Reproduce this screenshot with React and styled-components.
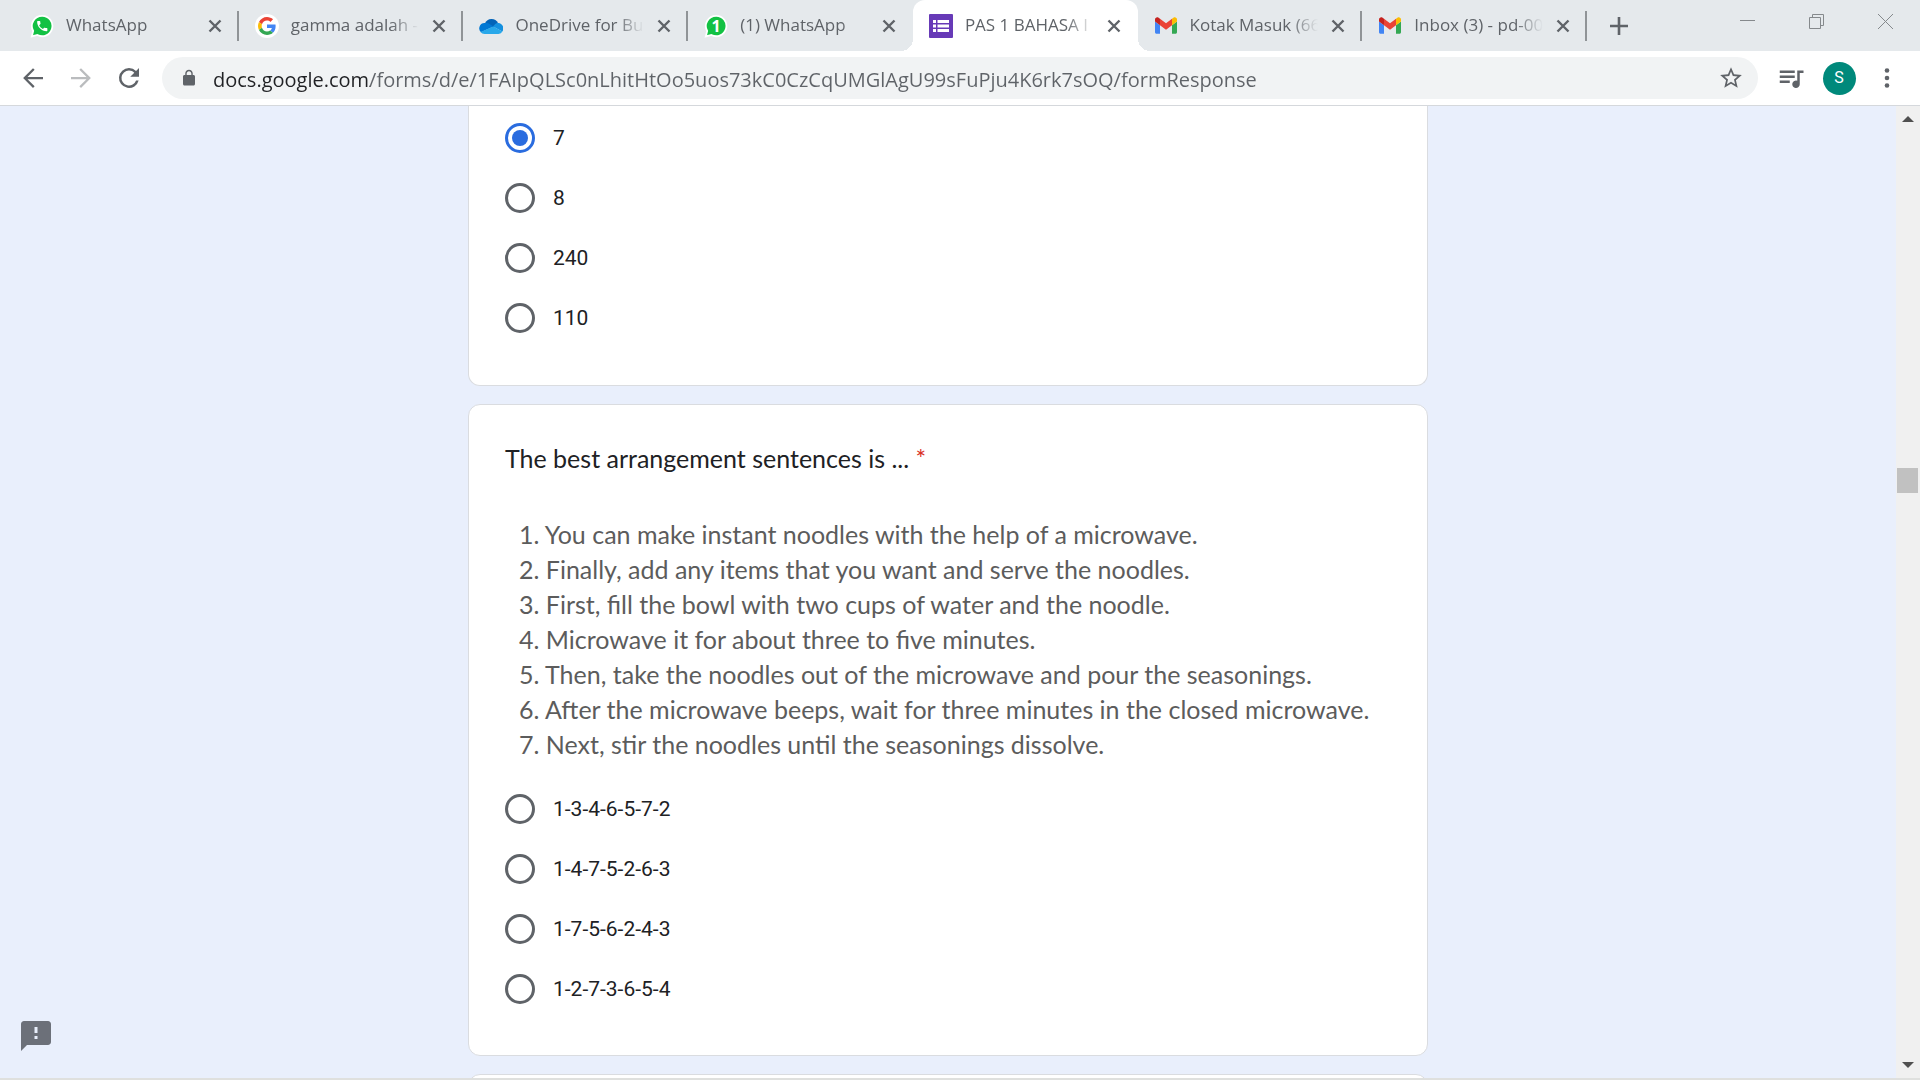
import React from 'react';
import styled, { createGlobalStyle, css } from 'styled-components';

const GlobalStyle = createGlobalStyle`
  *, *::before, *::after { box-sizing: border-box; }
  html, body { margin: 0; }
  body { font-family: Roboto, "Liberation Sans", sans-serif; color: #202124; }
  button, input { font: inherit; margin: 0; }
`;

/* ---------- window ---------- */

const Window = styled.div`
  display: flex;
  flex-direction: column;
  height: 100vh;
  overflow: hidden;
  background: #fff;
`;

const PlainButton = styled.button`
  display: flex;
  align-items: center;
  justify-content: center;
  padding: 0;
  border: 0;
  background: none;
  color: #5f6368;
`;

/* ---------- tab strip ---------- */

const TabStrip = styled.header`
  display: flex;
  flex: none;
  height: 51px;
  padding-left: 14px;
  background: #e5e9ec;
`;

const TabList = styled.nav`
  display: flex;
  flex: 0 1 1573px;
  min-width: 0;
`;

const Tab = styled.div`
  position: relative;
  display: flex;
  flex: 1 1 0;
  align-items: center;
  min-width: 0;
  padding: 0 12px 0 16px;

  ${({ $divider }) => $divider && css`
    &::after {
      content: "";
      position: absolute;
      right: 0;
      top: 11px;
      width: 2px;
      height: 30px;
      background: #909497;
    }
  `}

  ${({ $active }) => $active && css`
    background: #fff;
    border-radius: 12px 12px 0 0;

    &::before, &::after {
      content: "";
      position: absolute;
      bottom: 0;
      width: 12px;
      height: 12px;
    }
    &::before {
      right: 100%;
      background: radial-gradient(circle at 0 0, transparent 12px, #fff 12px);
    }
    &::after {
      left: 100%;
      background: radial-gradient(circle at 100% 0, transparent 12px, #fff 12px);
    }
  `}
`;

const Favicon = styled.span`
  display: flex;
  flex: none;
  align-items: center;
  justify-content: center;
  width: 24px;
  height: 24px;
`;

const TabTitle = styled.a`
  flex: 1;
  min-width: 0;
  margin: 0 8px 2px 12px;
  overflow: hidden;
  font: 17px/24px "Open Sans", "Noto Sans", sans-serif;
  color: #5f6368;
  text-decoration: none;
  white-space: nowrap;
  mask-image: linear-gradient(to left, transparent 0, #000 28px);
`;

const CloseTab = styled(PlainButton)`
  flex: none;
  width: 24px;
  height: 24px;
`;

const NewTab = styled(PlainButton)`
  width: 40px;
  margin: 0 12px;
`;

const WindowControls = styled.div`
  display: flex;
  margin-left: auto;
`;

const WindowButton = styled(PlainButton)`
  width: 69px;
  height: 43px;
  color: #85898c;
`;

/* ---------- toolbar ---------- */

const Toolbar = styled.div`
  display: flex;
  flex: none;
  align-items: center;
  gap: 6px;
  height: 55px;
  padding: 0 12px;
  border-bottom: 1px solid #d5d8dc;
`;

const ToolButton = styled(PlainButton)`
  flex: none;
  width: 42px;
  height: 42px;
  color: ${({ $muted }) => ($muted ? '#babcbe' : '#5f6368')};
`;

const Omnibox = styled.form`
  display: flex;
  flex: 1;
  align-items: center;
  gap: 15px;
  height: 42px;
  margin: 0 6px;
  padding: 0 6px 0 18px;
  border-radius: 21px;
  background: #f1f3f4;
  color: #5f6368;
`;

const Address = styled.input`
  flex: 1;
  min-width: 0;
  height: 32px;
  padding: 2px 0 0;
  border: 0;
  outline: 0;
  font: 20px/30px "Open Sans", "Noto Sans", sans-serif;
  color: transparent;
  background: linear-gradient(to right, #202124 157px, #5f6368 157px);
  background-clip: text;
`;

const Avatar = styled.span`
  display: flex;
  align-items: center;
  justify-content: center;
  width: 33px;
  height: 33px;
  border-radius: 50%;
  background: #00897b;
  color: #fff;
  font: 400 16px/20px Roboto, sans-serif;
`;

/* ---------- page ---------- */

const Viewport = styled.div`
  position: relative;
  display: flex;
  flex: 1;
  min-height: 0;
  background: #e9effc;
  border-bottom: 2px solid #dfe0de;
`;

const Scroller = styled.main`
  display: flex;
  flex: 1;
  flex-direction: column;
  align-items: center;
  gap: 18px;
  min-width: 0;
  overflow: hidden;
`;

const Card = styled.section`
  flex: none;
  width: 960px;
  max-width: 100%;
  padding: 36px;
  border: 1px solid #dadce0;
  border-radius: 12px;
  background: #fff;

  ${({ $continued }) => $continued && css`
    padding-top: 2px;
    padding-bottom: 37px;
    border-top: 0;
    border-radius: 0 0 12px 12px;
  `}
`;

const Question = styled.h2`
  margin: 0 0 42px;
  font: 400 25px/34px Lato, "Open Sans", sans-serif;
`;

const Required = styled.span`
  color: #d93025;
`;

const Sentences = styled.ul`
  margin: 0 0 17px;
  padding: 0 0 0 14px;
  list-style: none;
  font: 25px/35px Lato, "Open Sans", sans-serif;
  color: #5c5c5c;
`;

const Options = styled.div`
  display: flex;
  flex-direction: column;
`;

const Option = styled.label`
  display: flex;
  align-items: center;
  gap: 18px;
  height: 60px;
  font-size: 21px;
  line-height: 30px;
`;

const Radio = styled.input`
  display: grid;
  flex: none;
  place-items: center;
  width: 30px;
  height: 30px;
  border: 3px solid #5f6368;
  border-radius: 50%;
  appearance: none;

  &:checked { border-color: #2a6cdf; }
  &:checked::before {
    content: "";
    width: 16px;
    height: 16px;
    border-radius: 50%;
    background: #2a6cdf;
  }
`;

const Feedback = styled(PlainButton)`
  position: absolute;
  left: 18px;
  bottom: 24px;
  width: 36px;
  height: 36px;
  color: #6c7079;
`;

const Scrollbar = styled.aside`
  display: flex;
  flex: none;
  flex-direction: column;
  width: 24px;
  background: #f0f0f0;
`;

const ScrollButton = styled(PlainButton)`
  width: 24px;
  height: 26px;
  color: #505050;
`;

const Track = styled.div`
  display: flex;
  flex: 1;
  flex-direction: column;
  padding: 0 2px 0 1px;
`;

const TrackSpace = styled.div`
  flex: ${({ $share }) => $share} 1 0;
`;

const Thumb = styled.div`
  height: 25px;
  background: #c1c1c1;
`;

/* ---------- icons ---------- */

const Glyph = ({ size = 30, d }) => (
  <svg width={size} height={size} viewBox="0 0 24 24" fill="currentColor" aria-hidden="true">
    <path d={d} />
  </svg>
);

const PATHS = {
  back: 'M20 11.1H7.6l5.7-5.7L12 4.1 4.1 12l7.9 7.9 1.3-1.3-5.7-5.7H20z',
  forward: 'M4 11.1h12.4l-5.7-5.7L12 4.1l7.9 7.9-7.9 7.9-1.3-1.3 5.7-5.7H4z',
  reload: 'M17.65 6.35A7.96 7.96 0 0 0 12 4a8 8 0 1 0 7.73 10h-2.08A6 6 0 1 1 12 6c1.66 0 3.14.69 4.22 1.78L13 11h7V4z',
  lock: 'M18 8h-1V6c0-2.76-2.24-5-5-5S7 3.24 7 6v2H6c-1.1 0-2 .9-2 2v10c0 1.1.9 2 2 2h12c1.1 0 2-.9 2-2V10c0-1.1-.9-2-2-2zM8.9 8V6c0-1.71 1.39-3.1 3.1-3.1s3.1 1.39 3.1 3.1v2z',
  star: 'M22 9.24l-7.19-.62L12 2 9.19 8.63 2 9.24l5.46 4.73L5.82 21 12 17.27 18.18 21l-1.63-7.03zM12 15.4l-3.76 2.27 1-4.28-3.32-2.88 4.38-.38L12 6.1l1.71 4.04 4.38.38-3.32 2.88 1 4.28z',
  music: 'M15 6H3v2h12zm0 4H3v2h12zM3 16h8v-2H3zM17 6v8.18a3 3 0 1 0 2 2.82V8h3V6z',
  feedback: 'M20 2H4c-1.1 0-1.99.9-1.99 2L2 22l4-4h14c1.1 0 2-.9 2-2V4c0-1.1-.9-2-2-2zm-7 12h-2v-2h2zm0-4h-2V6h2z',
};

const Dots = () => (
  <svg width="6" height="20" viewBox="0 0 6 20" fill="currentColor" aria-hidden="true">
    <circle cx="3" cy="2.5" r="2.3" />
    <circle cx="3" cy="10" r="2.3" />
    <circle cx="3" cy="17.5" r="2.3" />
  </svg>
);

const Lines = ({ size, width, d }) => (
  <svg width={size} height={size} viewBox={`0 0 ${size} ${size}`} fill="none" stroke="currentColor" strokeWidth={width} aria-hidden="true">
    <path d={d} />
  </svg>
);

const BUBBLE = 'M12.3 1.8a10.2 10.2 0 1 1-4.9 19.2L1.8 22.4l1.4-5.4A10.2 10.2 0 0 1 12.3 1.8z';

const WhatsAppIcon = () => (
  <svg width="24" height="24" viewBox="0 0 24 24" aria-hidden="true">
    <path d={BUBBLE} fill="#12c143" stroke="#fff" strokeWidth="1.8" />
    <path
      transform="translate(5.4 5.2) scale(.57)"
      fill="#fff"
      d="M6.62 10.79c1.44 2.83 3.76 5.14 6.59 6.59l2.2-2.2c.27-.27.67-.36 1.02-.24 1.12.37 2.33.57 3.57.57.55 0 1 .45 1 1V20c0 .55-.45 1-1 1-9.39 0-17-7.61-17-17 0-.55.45-1 1-1h3.5c.55 0 1 .45 1 1 0 1.25.2 2.45.57 3.57.11.35.03.74-.25 1.02z"
    />
  </svg>
);

const WhatsAppBadge = () => (
  <svg width="24" height="24" viewBox="0 0 24 24" aria-hidden="true">
    <path d={BUBBLE} fill="#12c143" stroke="#fff" strokeWidth="1.8" />
    <text x="12" y="17.5" textAnchor="middle" fill="#fff" fontFamily="Open Sans, sans-serif" fontWeight="700" fontSize="16">1</text>
  </svg>
);

const GoogleIcon = () => (
  <svg width="24" height="24" viewBox="0 0 64 64" aria-hidden="true">
    <circle cx="32" cy="32" r="32" fill="#fff" />
    <g transform="translate(8 8)">
      <path fill="#EA4335" d="M24 9.5c3.54 0 6.71 1.22 9.21 3.6l6.85-6.85C35.9 2.38 30.47 0 24 0 14.62 0 6.51 5.38 2.56 13.22l7.98 6.19C12.43 13.72 17.74 9.5 24 9.5z" />
      <path fill="#4285F4" d="M46.98 24.55c0-1.57-.15-3.09-.38-4.55H24v9.02h12.94c-.58 2.96-2.26 5.48-4.78 7.18l7.73 6c4.51-4.18 7.09-10.36 7.09-17.65z" />
      <path fill="#FBBC05" d="M10.53 28.59c-.48-1.45-.76-2.99-.76-4.59s.27-3.14.76-4.59l-7.98-6.19C.92 16.46 0 20.12 0 24c0 3.88.92 7.54 2.56 10.78z" />
      <path fill="#34A853" d="M24 48c6.48 0 11.93-2.13 15.89-5.81l-7.73-6c-2.15 1.45-4.92 2.3-8.16 2.3-6.26 0-11.57-4.22-13.47-9.91l-7.98 6.19C6.51 42.62 14.62 48 24 48z" />
    </g>
  </svg>
);

const OneDriveIcon = () => (
  <svg width="24" height="16" viewBox="0 0 24 16" aria-hidden="true">
    <path fill="#0364b8" d="M6 5.3A7.2 7.2 0 0 1 19 4.9l-4.6 5.3L6 6.2z" />
    <path fill="#0078d4" d="M6 5.1c2-.3 3.5.2 4.9 1.1l3.6 2.4L2 14.3A5.3 5.3 0 0 1 6 5.1z" />
    <path fill="#1490df" d="M14 8.6l2.2-2.7c1-.9 2.2-1.1 3.2-.9a5.4 5.4 0 0 1 3.9 8.5z" />
    <path fill="#28a8ea" d="M14.3 8.5l9.1 5.1A4.4 4.4 0 0 1 19.5 16h-14A5.4 5.4 0 0 1 1.5 13.9z" />
  </svg>
);

const FormsIcon = () => (
  <svg width="24" height="24" viewBox="0 0 24 24" aria-hidden="true">
    <rect width="24" height="24" rx="1" fill="#673ab7" />
    <path fill="#fff" d="M4 6h3v3H4zM8.500 6H20v3H8.500zM4 10.500h3v3H4zM8.500 10.500H20v3H8.500zM4 15h3v3H4zM8.500 15H20v3H8.500z" />
  </svg>
);

const GmailIcon = () => (
  <svg width="22" height="17" viewBox="52 42 88 66" aria-hidden="true">
    <path fill="#4285f4" d="M58 108h14V74L52 59v43c0 3.32 2.69 6 6 6" />
    <path fill="#34a853" d="M120 108h14c3.32 0 6-2.69 6-6V59l-20 15" />
    <path fill="#fbbc04" d="M120 48v26l20-15v-8c0-7.42-8.47-11.65-14.4-7.2" />
    <path fill="#ea4335" d="M72 74V48l24 18 24-18v26L96 92" />
    <path fill="#c5221f" d="M52 51v8l20 15V48l-5.6-4.2c-5.94-4.45-14.4-.22-14.4 7.2" />
  </svg>
);

const Triangle = ({ d }) => (
  <svg width="12" height="6" viewBox="0 0 12 6" fill="currentColor" aria-hidden="true">
    <path d={d} />
  </svg>
);

/* ---------- data ---------- */

const TABS = [
  { title: 'WhatsApp', Icon: WhatsAppIcon, divider: true },
  { title: 'gamma adalah -', Icon: GoogleIcon, divider: true },
  { title: 'OneDrive for Bus', Icon: OneDriveIcon, divider: true },
  { title: '(1) WhatsApp', Icon: WhatsAppBadge },
  { title: 'PAS 1 BAHASA I', Icon: FormsIcon, active: true },
  { title: 'Kotak Masuk (66', Icon: GmailIcon, divider: true },
  { title: 'Inbox (3) - pd-00', Icon: GmailIcon, divider: true },
];

const SENTENCES = [
  '1. You can make instant noodles with the help of a microwave.',
  '2. Finally, add any items that you want and serve the noodles.',
  '3. First, fill the bowl with two cups of water and the noodle.',
  '4. Microwave it for about three to five minutes.',
  '5. Then, take the noodles out of the microwave and pour the seasonings.',
  '6. After the microwave beeps, wait for three minutes in the closed microwave.',
  '7. Next, stir the noodles until the seasonings dissolve.',
];

const RadioGroup = ({ name, options, selected }) => (
  <Options role="radiogroup">
    {options.map((text) => (
      <Option key={text}>
        <Radio type="radio" name={name} value={text} defaultChecked={text === selected} />
        {text}
      </Option>
    ))}
  </Options>
);

export default function App() {
  return (
    <Window>
      <GlobalStyle />
      <TabStrip>
        <TabList>
          {TABS.map(({ title, Icon, active, divider }) => (
            <Tab key={title} $active={active} $divider={divider}>
              <Favicon><Icon /></Favicon>
              <TabTitle href="#">{title}</TabTitle>
              <CloseTab aria-label="Close tab">
                <Lines size={14} width={2.4} d="M1.5 1.5l11 11M12.5 1.5l-11 11" />
              </CloseTab>
            </Tab>
          ))}
        </TabList>
        <NewTab aria-label="New tab">
          <Lines size={18} width={2.6} d="M9 0v18M0 9h18" />
        </NewTab>
        <WindowControls>
          <WindowButton aria-label="Minimize">
            <Lines size={15} width={1} d="M0 6.5h15" />
          </WindowButton>
          <WindowButton aria-label="Restore">
            <Lines size={15} width={1} d="M.5 3.5h11v11H.5zM3.5 3.5v-3h11v11h-3" />
          </WindowButton>
          <WindowButton aria-label="Close">
            <Lines size={15} width={1} d="M0 0l15 15M15 0L0 15" />
          </WindowButton>
        </WindowControls>
      </TabStrip>

      <Toolbar>
        <ToolButton aria-label="Back"><Glyph d={PATHS.back} /></ToolButton>
        <ToolButton aria-label="Forward" $muted><Glyph d={PATHS.forward} /></ToolButton>
        <ToolButton aria-label="Reload"><Glyph d={PATHS.reload} /></ToolButton>
        <Omnibox>
          <Glyph size={18} d={PATHS.lock} />
          <Address
            aria-label="Address"
            defaultValue="docs.google.com/forms/d/e/1FAIpQLSc0nLhitHtOo5uos73kC0CzCqUMGlAgU99sFuPju4K6rk7sOQ/formResponse"
          />
          <ToolButton type="button" aria-label="Bookmark"><Glyph size={26} d={PATHS.star} /></ToolButton>
        </Omnibox>
        <ToolButton aria-label="Media"><Glyph d={PATHS.music} /></ToolButton>
        <ToolButton aria-label="Profile"><Avatar>S</Avatar></ToolButton>
        <ToolButton aria-label="Menu"><Dots /></ToolButton>
      </Toolbar>

      <Viewport>
        <Scroller>
          <Card $continued>
            <RadioGroup name="number" options={['7', '8', '240', '110']} selected="7" />
          </Card>
          <Card>
            <Question>
              The best arrangement sentences is ... <Required>*</Required>
            </Question>
            <Sentences>
              {SENTENCES.map((s) => <li key={s}>{s}</li>)}
            </Sentences>
            <RadioGroup
              name="arrangement"
              options={['1-3-4-6-5-7-2', '1-4-7-5-2-6-3', '1-7-5-6-2-4-3', '1-2-7-3-6-5-4']}
            />
          </Card>
          <Card />
        </Scroller>
        <Scrollbar>
          <ScrollButton aria-label="Scroll up"><Triangle d="M6 0l6 6H0z" /></ScrollButton>
          <Track>
            <TrackSpace $share={336} />
            <Thumb />
            <TrackSpace $share={559} />
          </Track>
          <ScrollButton aria-label="Scroll down"><Triangle d="M0 0h12L6 6z" /></ScrollButton>
        </Scrollbar>
        <Feedback aria-label="Report a problem"><Glyph size={36} d={PATHS.feedback} /></Feedback>
      </Viewport>
    </Window>
  );
}
